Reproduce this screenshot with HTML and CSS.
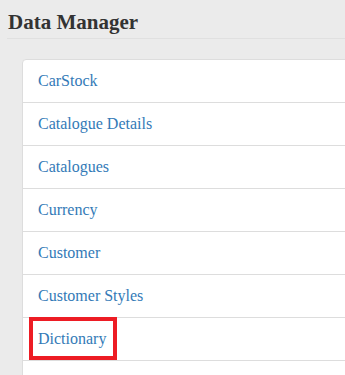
FILE: index.html
```html
<!DOCTYPE html>
<html>
<head>
<title>Data Manager</title>
<link rel="stylesheet" href="styles.css">
</head>
<body>

<h2 class="page-title">Data Manager</h2>

<div class="list-card">
  <div class="list-row"><a href="#">CarStock</a></div>
  <div class="list-row"><a href="#">Catalogue Details</a></div>
  <div class="list-row"><a href="#">Catalogues</a></div>
  <div class="list-row"><a href="#">Currency</a></div>
  <div class="list-row"><a href="#">Customer</a></div>
  <div class="list-row"><a href="#">Customer Styles</a></div>
  <div class="list-row marked"><a href="#">Dictionary</a></div>
  <div class="list-row"></div>
</div>

</body>
</html>
```

FILE: styles.css
```css
body {
  margin: 0;
  background-color: #ebebeb;
  font-family: "Liberation Serif", serif;
  overflow: hidden;
}
.page-title {
  margin: 0 0 20px 7px;
  padding: 11px 1px 5px;
  border-bottom: 1px solid #e0e0e0;
  font-size: 21px;
  line-height: 22px;
  font-weight: bold;
  color: #333;
}
.list-card {
  margin: 0 -20px 0 22px;
  background-color: #fff;
  border: 1px solid #ddd;
  border-top-left-radius: 4px;
}
.list-row {
  position: relative;
  height: 42px;
  line-height: 42px;
  padding-left: 15px;
  border-bottom: 1px solid #ddd;
  font-size: 16px;
}
.list-row a {
  color: #337ab7;
  text-decoration: none;
}
.marked::after {
  content: "";
  position: absolute;
  top: -1px;
  left: 6px;
  width: 88px;
  height: 43px;
  box-sizing: border-box;
  border: 4px solid #ed1c24;
}
```
